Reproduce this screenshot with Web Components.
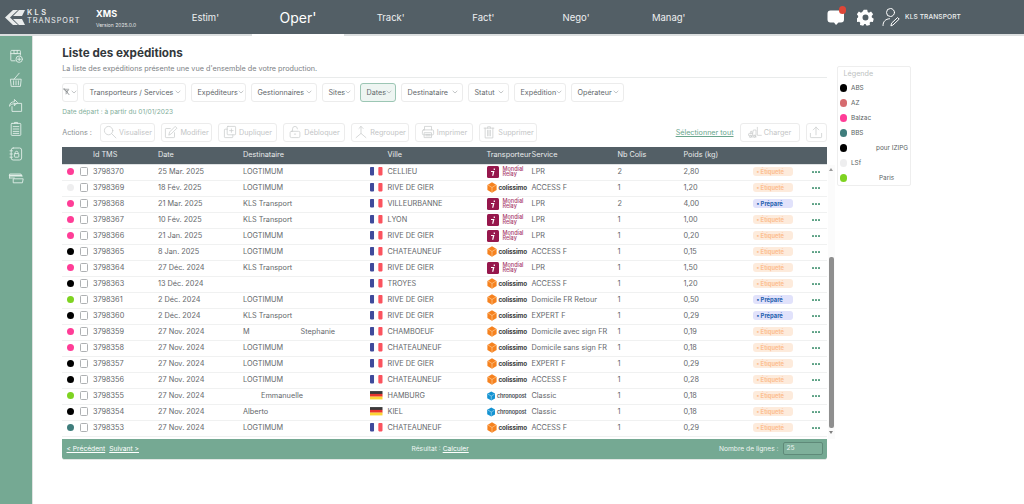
<!DOCTYPE html>
<html lang="fr"><head><meta charset="utf-8"><title>XMS</title>
<style>
html,body{margin:0;padding:0;height:504px;overflow:hidden;background:#fff;font-family:"Inter","Liberation Sans",sans-serif}
</style></head><body>
<xms-app></xms-app>
<script>
const FONT='"Inter","Liberation Sans",sans-serif';
function def(name,render){
  customElements.define(name,class extends HTMLElement{
    connectedCallback(){ if(!this.shadowRoot){this.attachShadow({mode:'open'}).innerHTML=render(this);} }
  });
}
const A=(el,k,d='')=>el.getAttribute(k)??d;
const S=(inner,vb='0 0 20 20',extra='')=>`<svg viewBox="${vb}" fill="none" stroke="currentColor" stroke-width="1.1" stroke-linecap="round" stroke-linejoin="round" ${extra}>${inner}</svg>`;

const ICONS={
 s1:S('<path d="M9 16H4.500a1 1 0 0 1-1-1V4a1 1 0 0 1 1-1h10a1 1 0 0 1 1 1v5"/><path d="M3.500 7h12M7.500 3v4h4V3"/><circle cx="14" cy="14" r="4"/><path d="M14 12v4M12 14h4"/>'),
 s2:S('<path d="M3.500 9h13l-1 9h-11z" /><path d="M7 11v5M10 11v5M13 11v5"/><path d="M7.500 9 14 1.500"/>'),
 s3:S('<path d="M8 8h9v10H5v-6"/><path d="M2 11c0-3 2-5 6-5V3l4 4-4 4V8.500c-3 0-4.500 1-6 2.500z"/>'),
 s4:S('<rect x="4" y="3" width="12" height="15" rx="1"/><path d="M8 3V1.800h4V3M6.500 7h7M6.500 10h7M6.500 13h7M6.500 15.500h7"/>'),
 s5:S('<rect x="4" y="2.500" width="13" height="15" rx="2.500"/><path d="M2.500 6h3M2.500 10h3M2.500 14h3"/><rect x="8" y="9.500" width="5.500" height="4.500" rx=".8"/><path d="M9 9.500V8a1.800 1.800 0 0 1 3.500 0v1.500"/>'),
 s6:S('<path d="M2 10V5h14l1.500 3"/><path d="M2 7h15" stroke-width="2"/><path d="M2 10h6M7 11h12l-1 5H7z"/>','0 0 20 20'),
 search:S('<circle cx="8" cy="8" r="6"/><path d="m12.500 12.500 6 6"/>'),
 edit:S('<path d="M15 11v6a1 1 0 0 1-1 1H3a1 1 0 0 1-1-1V6a1 1 0 0 1 1-1h6"/><path d="M7 14l1-4L16 2l2.500 2.500-8 8z"/>'),
 dup:S('<rect x="6" y="2" width="12" height="12" rx="1"/><path d="M12 5.500v5M9.500 8h5"/><path d="M6 6H3a1 1 0 0 0-1 1v10a1 1 0 0 0 1 1h10a1 1 0 0 0 1-1v-3"/>'),
 lock:S('<rect x="3" y="9" width="14" height="9" rx="2"/><path d="M6.500 9V5.500a3.500 3.500 0 0 1 7 0"/><path d="M9 13h2"/>'),
 merge:S('<path d="M10 2v10M3 18l7-6 7 6M7 5l3-3 3 3"/>'),
 print:S('<path d="M5 7V2h10v5"/><rect x="2" y="7" width="16" height="7" rx="1.500"/><rect x="5" y="11" width="10" height="7"/><path d="M7 13.500h6M7 15.500h6"/>'),
 trash:S('<path d="M3 4.500h14M8 4.500V2.500h4v2"/><path d="M4.500 4.500v14h11v-14"/><path d="M8 7.500v8M10 7.500v8M12 7.500v8"/>'),
 fork:S('<path d="M1 15h6v-3H2zM7 15h5V7H8l-1 5M14 3v12h6M2 17.500h10"/><circle cx="4" cy="16.500" r="1.500"/><circle cx="10" cy="16.500" r="1.500"/><path d="M4 12V9h2v3"/>','0 0 21 20'),
 up:S('<path d="M2 12v5a1 1 0 0 0 1 1h14a1 1 0 0 0 1-1v-5"/><path d="M10 14V3M6 7l4-4 4 4"/>'),
 filter:S('<path d="M2 3h13L10 9v4l-2.500 2.500V9z"/><path d="M3 1.500 15 16.500" stroke-width="1.700"/><path d="M9 5l4 1-2 3"/>')
};

def('xms-topbar',()=>`<style>
:host{display:flex;align-items:stretch;height:34px;background:#535f66;border-bottom:2px solid #dcdfe0;color:#fff;box-sizing:content-box}
.logo{display:flex;align-items:center;width:92px;padding-left:4px;box-sizing:border-box;gap:1px}
.logo svg{width:22px;height:17px;flex:none}
.lt{display:flex;flex-direction:column;font-size:7.400px;line-height:7.600px;color:#eceeef;letter-spacing:.95px;margin-top:-1px}
.lt b{font-weight:600;letter-spacing:2.400px}
.prod{width:67px;display:flex;flex-direction:column;padding:8px 0 0 4px;box-sizing:border-box}
.prod b{font-size:9px;line-height:11px;font-weight:700;letter-spacing:.15px}
.prod span{font-size:5px;line-height:7px;margin-top:3px;color:#e6e8e9;white-space:nowrap}
nav{display:flex;width:556px}
xms-nav{width:92.700px}
.right{display:flex;align-items:center;margin-left:112px;}
.right svg{display:block;flex:none}
.bub{position:relative;width:18px;height:18px;margin-right:12px}
.bub i{position:absolute;right:-1px;top:-2px;width:7.500px;height:7.500px;border-radius:50%;background:#de4637}
.name{font-size:6.600px;font-weight:500;color:#eef0f0;margin-left:5px;white-space:nowrap;letter-spacing:.1px}
</style>
<div class="logo"><svg viewBox="0 0 22 17" fill="#e9ecec"><path d="M9 1 1 8.500 9 16h5L6 8.500 14 1zM15 1 9 7h9l3-6zM9 10l6 6h6l-3-6z" /></svg><div class="lt"><b>KLS</b><span>TRANSPORT</span></div></div>
<div class="prod"><b>XMS</b><span>Version 2025.0.0</span></div>
<nav><xms-nav>Estim'</xms-nav><xms-nav active>Oper'</xms-nav><xms-nav>Track'</xms-nav><xms-nav>Fact'</xms-nav><xms-nav>Nego'</xms-nav><xms-nav>Manag'</xms-nav></nav>
<div class="right">
<div class="bub"><svg width="18" height="18" viewBox="0 0 18 18" fill="#fff"><path d="M3.500 2.500h10.500a3 3 0 0 1 3 3v6a3 3 0 0 1-3 3h-2.500L9 17l-2-2.500H3.500a3 3 0 0 1-3-3v-6a3 3 0 0 1 3-3z"/></svg><i></i></div>
<svg width="17" height="17" viewBox="0 0 20 20" fill="#fff" style="margin-right:8px"><path fill-rule="evenodd" d="M8 1h4l.6 2.600 1.500.7L16.500 3 19 6.200l-1.700 2 .2 1.800 2.200 1.400-1 3.800-2.600-.1-1.200 1.200.3 2.600-3.800.9-1.400-2.200H8.700l-1.400 2.200-3.800-.9.300-2.600-1.200-1.200-2.600.1-1-3.800L1.200 10l.2-1.800-1.700-2L2.200 3l2.400 1.300 1.500-.7zM10 6.500a3.500 3.500 0 1 0 0 7 3.500 3.500 0 0 0 0-7z"/></svg>
<svg width="18" height="20" viewBox="0 0 18 20" fill="none" stroke="#fff" stroke-width="1" stroke-linecap="round"><circle cx="8.500" cy="5.500" r="4"/><path d="M1 18.500c0-4 2.500-6.500 6.500-6.800"/><path d="M9 18.500l.6-2.400 6-5.600 1.600 1.600-6 5.700z"/></svg>
<div class="name">KLS TRANSPORT</div>
</div>`);

def('xms-nav',el=>`<style>
:host{display:flex;align-items:center;justify-content:center;box-sizing:border-box;margin-bottom:-2px;font-size:9.500px;color:#eef0f1;font-weight:400;padding-bottom:2px}
:host([active]){font-size:14px;color:#fff;border-bottom:2px solid #fff;padding-bottom:0}
</style><slot></slot>`);

def('xms-sidebar',()=>`<style>
:host{display:flex;flex-direction:column;align-items:center;gap:8.500px;width:32px;flex:none;background:#75a993;border-right:1.500px solid #dfe3e1;padding-top:11.500px;box-sizing:content-box;color:#e3efe9}
svg{width:16px;height:16px;display:block;flex:none}
</style>${['s1','s2','s3','s4','s5','s6'].map(k=>ICONS[k]).join('')}`);

def('xms-filter',el=>`<style>
:host{display:inline-flex;align-items:center;justify-content:space-between;height:18.500px;box-sizing:border-box;border:1px solid #ececec;border-radius:3px;background:#fff;padding:0 4px 0 6px;font-size:7.200px;color:#62676a;white-space:nowrap}
:host([on]){background:#eef5f2;border-color:#9cc6b4}
svg{width:6px;height:4px;flex:none;color:#a9adaf}
</style><slot></slot><svg viewBox="0 0 6 4" fill="none" stroke="currentColor" stroke-width=".7"><path d="M.7.8 3 3 5.300.8"/></svg>`);

def('xms-action',el=>`<style>
:host{display:inline-flex;align-items:center;justify-content:center;gap:2px;height:19px;box-sizing:border-box;border:1px solid #ececec;border-radius:3px;background:#fff;font-size:7.200px;color:#c3c5c6;white-space:nowrap}
svg{width:14px;height:14px;flex:none;color:#cbcdce}
</style>${ICONS[A(el,'icon')]}<slot></slot>`);

const CAR={
 m:`<svg width="12" height="12" viewBox="0 0 12 12"><rect width="12" height="12" rx="1.500" fill="#96174c"/><path d="M6.700 2.600h1.200v1.300H6.700zM4 5h3.500L6.300 9.700H5.100L5.900 6H4z" fill="#fff"/></svg><span class="mr">Mondial<br>Relay</span>`,
 c:`<svg width="10" height="11" viewBox="0 0 10 11"><path d="M5 .3 9.600 3v5L5 10.700.4 8V3z" fill="#f6821f"/><path d="M5 5.500 9 3M5 5.500 1 3M5 5.500V10" stroke="#ffd7a8" stroke-width=".6"/></svg><b class="co">colissimo</b>`,
 h:`<svg width="8.500" height="10" viewBox="0 0 9 10"><path d="M4.500 .2 8.800 2.600v4.800L4.500 9.800.2 7.400V2.600z" fill="#1493d2"/><path d="M4.500 5 8 3M4.500 5 1 3M4.500 5v4" stroke="#bfe4f6" stroke-width=".6"/></svg><span class="ch">chronopost</span>`
};
const FLAG={
 fr:`<svg width="12.500" height="8.500" viewBox="0 0 12 8"><rect width="4" height="8" rx=".8" fill="#3f4a9b"/><rect x="4" width="4" height="8" fill="#fff"/><rect x="8" width="4" height="8" rx=".8" fill="#fb535e"/></svg>`,
 de:`<svg width="12.500" height="8.500" viewBox="0 0 12 8"><rect width="12" height="2.800" fill="#3a3a3a"/><rect y="2.700" width="12" height="2.700" fill="#e8352f"/><rect y="5.300" width="12" height="2.700" fill="#fcd535"/></svg>`
};
const COLS='31.500px 65px 85px 126.500px 18px 99px 45px 86px 66px 69px 40px 19px 1fr';

def('xms-row',el=>{
 const d=JSON.parse(A(el,'data'));
 const st=d.s==='p'?'<span class="pill p">• Préparé</span>':'<span class="pill e">• Étiqueté</span>';
 return `<style>
:host{display:grid;grid-template-columns:${COLS};height:16px;flex:none;box-sizing:border-box;align-items:center;background:#fff;border-bottom:1.300px solid #f0f1f1;padding-bottom:1px;font-size:7.300px;color:#64676b;white-space:nowrap}
.lead{display:flex;align-items:center;padding-left:5px;gap:6px}
.dot{width:7px;height:7px;border-radius:50%;flex:none}
.cb{width:6.500px;height:6.500px;border:1px solid #aeb1b3;border-radius:1.500px;flex:none}
.fl svg{display:block;margin-left:.5px}
.car{display:flex;align-items:center;gap:2px}
.car svg{flex:none}
.mr{font-size:5.500px;line-height:5px;color:#a83a6c;font-weight:500;margin-left:2px}
.co{font-size:6.300px;font-weight:700;color:#3b3b3b;letter-spacing:-.1px}
.ch{font-size:5.500px;font-weight:600;color:#3f4850;letter-spacing:-.1px}
.pill{display:block;width:40px;height:9px;border-radius:3px;font-size:5.800px;line-height:9px;font-weight:700;padding-left:4px;box-sizing:border-box}
.e{background:#fdebdc;color:#fcc092}.p{background:#e1e2fb;color:#1f5fae}
.more{display:flex;gap:1.200px}
.more i{width:2px;height:2px;border-radius:.5px;background:#5aa083}
</style>
<div class="lead"><span class="dot" style="background:${d.c}"></span><span class="cb"></span></div>
<span>${d.id}</span><span>${d.d}</span><span style="${d.dp?'padding-left:'+d.dp+'px':''}">${d.n}${d.n2?`<span style="margin-left:${d.n2p}px">${d.n2}</span>`:''}</span>
<span class="fl">${FLAG[d.f]}</span><span>${d.v}</span><span class="car">${CAR[d.t]}</span><span>${d.sv}</span><span>${d.q}</span><span>${d.w}</span>${st}<span></span><span class="more"><i></i><i></i><i></i></span>`;
});

def('xms-table',()=>{
 const P='#ff3d97',K='#000',G='#7ed321',W='#eeeeef',T='#3f7d7c';
 const L='LOGTIMUM',R='RIVE DE GIER',C='CHATEAUNEUF',KL='KLS Transport',N='27 Nov. 2024';
 const rows=[
 [P,'3798370','25 Mar. 2025',L,'fr','CELLIEU','m','LPR','2','2,80','e'],
 [W,'3798369','18 Fév. 2025',L,'fr',R,'c','ACCESS F','1','1,20','e'],
 [P,'3798368','21 Mar. 2025',KL,'fr','VILLEURBANNE','m','LPR','2','4,00','p'],
 [P,'3798367','10 Fév. 2025',KL,'fr','LYON','m','LPR','1','1,00','e'],
 [P,'3798366','21 Jan. 2025',L,'fr',R,'m','LPR','1','0,20','e'],
 [K,'3798365','8 Jan. 2025',L,'fr',C,'c','ACCESS F','1','0,15','e'],
 [P,'3798364','27 Déc. 2024',KL,'fr',R,'m','LPR','1','1,50','e'],
 [K,'3798363','13 Déc. 2024','','fr','TROYES','c','ACCESS F','1','1,20','e'],
 [G,'3798361','2 Déc. 2024',L,'fr',R,'c','Domicile FR Retour','1','0,50','p'],
 [K,'3798360','2 Déc. 2024',KL,'fr',R,'c','EXPERT F','1','0,29','p'],
 [P,'3798359',N,'M','fr','CHAMBOEUF','c','Domicile avec sign FR','1','0,19','e',{n2:'Stephanie',n2p:51}],
 [P,'3798358',N,L,'fr',C,'c','Domicile sans sign FR','1','0,18','e'],
 [K,'3798357',N,L,'fr',R,'c','EXPERT F','1','0,29','e'],
 [K,'3798356',N,L,'fr',C,'c','ACCESS F','1','0,28','e'],
 [G,'3798355',N,'Emmanuelle','de','HAMBURG','h','Classic','1','0,18','e',{dp:18}],
 [K,'3798354',N,'Alberto','de','KIEL','h','Classic','1','0,18','e'],
 [T,'3798353',N,L,'fr',C,'c','ACCESS F','1','0,29','e']
 ];
 const html=rows.map(r=>{
  const o=Object.assign({c:r[0],id:r[1],d:r[2],n:r[3],f:r[4],v:r[5],t:r[6],sv:r[7],q:r[8],w:r[9],s:r[10]},r[11]||{});
  return `<xms-row data='${JSON.stringify(o).replace(/'/g,"&#39;")}'></xms-row>`;
 }).join('');
 return `<style>
:host{display:grid;grid-template-columns:765px 11px;grid-template-rows:18.500px 271.500px;}
.hd{grid-column:1;display:grid;grid-template-columns:${COLS};align-items:center;background:#535f66;color:#e8ebec;font-size:7.300px;letter-spacing:-.02px;border-bottom:1px solid #dfe2e3;box-sizing:border-box;white-space:nowrap;padding-bottom:1px}
.body{grid-column:1;display:flex;flex-direction:column;justify-content:flex-end;overflow:hidden;height:271.500px}
.sb{grid-column:2;grid-row:2;display:flex;flex-direction:column;align-items:center;background:#fbfbfb;width:7.500px;margin-left:1px;height:274px}
.sb i{display:block;flex:none}
.ua{width:0;height:0;border:2.500px solid transparent;border-bottom:3.500px solid #9a9a9a;border-top:0;margin-top:3px}
.th{width:4.500px;height:171px;background:#8f8f8f;border-radius:2px;margin-top:85.500px}
.da{width:0;height:0;border:2.500px solid transparent;border-top:3.500px solid #808080;border-bottom:0;margin-top:3px}
</style>
<div class="hd"><span></span><span>Id TMS</span><span>Date</span><span>Destinataire</span><span></span><span>Ville</span><span>Transporteur</span><span>Service</span><span>Nb Colis</span><span>Poids (kg)</span></div><span></span>
<div class="body">${html}</div>
<div class="sb"><i class="ua"></i><i class="th"></i><i class="da"></i></div>`;
});

def('xms-pager',()=>`<style>
:host{display:grid;grid-template-columns:1fr 1fr 1fr;align-items:center;height:21.500px;width:765px;background:#75a993;border-radius:0 0 3px 3px;border-bottom:1px solid #e3e8e5;box-sizing:border-box;padding:0 4px 0 5px;color:#eef5f2;font-size:6.700px;white-space:nowrap;margin-top:2px}
a{color:#fff;text-decoration:underline}
.l{display:flex;gap:4px}
.c{justify-self:start;margin-left:93px}
.r{display:flex;align-items:center;justify-content:flex-end;gap:4px}
.in{width:40px;height:13px;border:1px solid #5f8a79;border-radius:2px;box-sizing:border-box;background:#7fb09b;padding-left:3px;line-height:11px}
</style>
<div class="l"><a>&lt; Précédent</a><a>Suivant &gt;</a></div>
<div class="c">Résultat : <a>Calculer</a></div>
<div class="r">Nombre de lignes :<span class="in">25</span></div>`);

def('xms-legend',()=>{
 const it=[['#000','ABS'],['#d66b6f','AZ'],['#ff3d97','Balzac'],['#3f7d7c','BBS'],['#000','pour IZIPG',25],['#eeeeef','LSf'],['#7ed321','Paris',28]];
 return `<style>
:host{display:flex;flex-direction:column;width:74px;height:120px;box-sizing:border-box;border:1px solid #eeeeee;border-radius:2px;background:#fff;padding:.5px 0 0 2px;font-size:6.400px;color:#5a5f63;flex:none;margin:30px 0 0 0;white-space:nowrap}
.t{font-size:7.200px;color:#bdbfc1;margin:0 0 2px 4px;height:11px;line-height:11px;flex:none}
.i{display:flex;align-items:center;height:15px;gap:4px;flex:none}
.i i{width:7.500px;height:7.500px;border-radius:50%;flex:none}
</style><div class="t">Légende</div>${it.map(x=>`<div class="i"><i style="background:${x[0]}"></i><span style="margin-left:${x[2]||0}px">${x[1]}</span></div>`).join('')}`;
});

def('xms-app',()=>`<style>
:host{display:flex;flex-direction:column;width:1024px;height:504px;font-family:${FONT};overflow:hidden}
.mid{display:flex;flex:1;min-height:0}
main{width:775px;margin-left:28.500px;flex:none;display:flex;flex-direction:column;padding-top:10px;box-sizing:border-box}
h1{margin:0;padding-left:.7px;font-size:11.700px;line-height:15px;font-weight:700;color:#33383c}
.sub{margin:3px 0 0;padding:0 0 3px .7px;font-size:7.250px;line-height:10px;color:#7d8285;border-bottom:1px solid #e9ebeb;width:765px;box-sizing:border-box}
.filters{display:flex;gap:5px;margin-top:5px;width:765px}
.filters>xms-filter:first-child{padding:0;justify-content:center;color:#666}
.filters svg{width:14px;height:14px;color:#6b7174}
.date{font-size:6.600px;line-height:10px;color:#7fae9a;margin-top:5px;padding-left:.7px}
.act{display:flex;align-items:center;gap:6px;margin-top:6px;height:19px;width:765px;font-size:7.200px;color:#8b8f92}
.act>span:first-child{width:32px;padding-left:.7px;box-sizing:border-box;margin-right:.5px}
.sel{margin-left:auto;color:#69a58c;text-decoration:underline;white-space:nowrap}
xms-table{margin-top:5px}
</style>
<xms-topbar></xms-topbar>
<div class="mid">
<xms-sidebar></xms-sidebar>
<main>
<h1>Liste des expéditions</h1>
<p class="sub">La liste des expéditions présente une vue d'ensemble de votre production.</p>
<div class="filters">
<xms-filter style="width:16px">${ICONS.filter}</xms-filter>
<xms-filter style="width:103px">Transporteurs / Services</xms-filter>
<xms-filter style="width:55px">Expéditeurs</xms-filter>
<xms-filter style="width:66px">Gestionnaires</xms-filter>
<xms-filter style="width:33px">Sites</xms-filter>
<xms-filter on style="width:36px">Dates</xms-filter>
<xms-filter style="width:62px">Destinataire</xms-filter>
<xms-filter style="width:41px">Statut</xms-filter>
<xms-filter style="width:52px">Expédition</xms-filter>
<xms-filter style="width:53px">Opérateur</xms-filter>
</div>
<div class="date">Date départ : à partir du 01/01/2023</div>
<div class="act"><span>Actions :</span>
<xms-action icon="search" style="width:55px">Visualiser</xms-action>
<xms-action icon="edit" style="width:51px">Modifier</xms-action>
<xms-action icon="dup" style="width:59px">Dupliquer</xms-action>
<xms-action icon="lock" style="width:62px">Débloquer</xms-action>
<xms-action icon="merge" style="width:58px">Regrouper</xms-action>
<xms-action icon="print" style="width:58px">Imprimer</xms-action>
<xms-action icon="trash" style="width:58px">Supprimer</xms-action>
<span class="sel">Sélectionner tout</span>
<xms-action icon="fork" style="width:60px">Charger</xms-action>
<xms-action icon="up" style="width:21px"></xms-action>
</div>
<xms-table></xms-table>
<xms-pager></xms-pager>
</main>
<xms-legend></xms-legend>
</div>`);
</script>
</body></html>
